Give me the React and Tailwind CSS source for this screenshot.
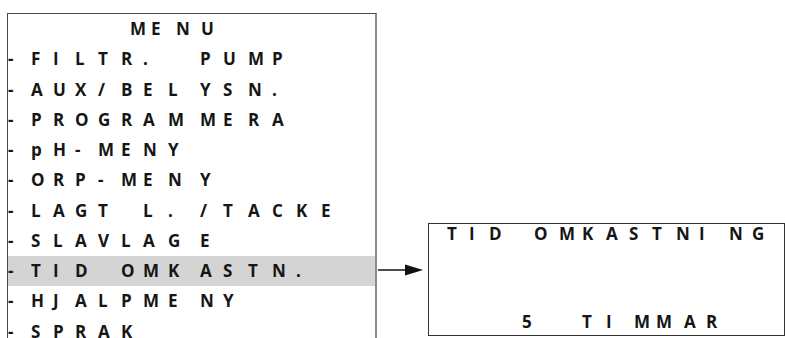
import React from "react";

const menuRows = [
  "-FILTR. PUMP",
  "-AUX/BELYSN.",
  "-PROGRAMMERA",
  "-pH-MENY",
  "-ORP-MENY",
  "-LAGT L./TACKE",
  "-SLAVLAGE",
  "-TID OMKASTN.",
  "-HJALPMENY",
  "-SPRAK",
];

const font = { fontFamily: "'Open Sans', Lato, sans-serif" };

function MenuRow({ text, active }) {
  return (
    <div
      className={
        "grid grid-cols-[23px_22px_22px_23px_23px_22px_25px_32px_23px_25px_24px_24px_25px_1fr] h-[30.25px] items-center leading-[30.25px] " +
        (active ? "bg-[#d4d4d4]" : "")
      }
    >
      {text.split("").map((c, i) => (
        <span key={i}>{c}</span>
      ))}
    </div>
  );
}

export default function App() {
  return (
    <div
      className="h-[338px] w-[785px] overflow-hidden bg-white flex items-start text-[17px] font-bold text-[#161616]"
      style={font}
    >
      {/* menu list */}
      <div className="ml-[7px] mt-[13px] w-[370px] h-[340px] border-l border-t border-[#4a4a4a] border-r-2 border-r-[#8a8a8a]">
        <div className="flex h-[30.25px] items-center leading-[30.25px] pl-[122px]">
          <span className="w-[21px]">M</span>
          <span className="w-[25px]">E</span>
          <span className="w-[25px]">N</span>
          <span>U</span>
        </div>
        {menuRows.map((r) => (
          <MenuRow key={r} text={r} active={r === "-TID OMKASTN."} />
        ))}
      </div>

      {/* arrow */}
      <div className="w-[51px] mt-[264px] flex">
        <svg width="51" height="12" viewBox="0 0 51 12">
          <line x1="1" y1="6" x2="30" y2="6" stroke="#111" strokeWidth="1.5" />
          <polygon points="28,0.5 46,6 28,11.5" fill="#111" />
        </svg>
      </div>

      {/* detail panel */}
      <div className="mt-[223px] w-[357px] h-[113px] border border-[#333] flex flex-col justify-between pb-[3px]">
        <div className="flex h-5 leading-5 pl-[18px]">
          <span className="w-[22px]">T</span>
          <span className="w-[20px]">I</span>
          <span className="w-[45px]">D</span>
          <span className="w-[25px]">O</span>
          <span className="w-[23px]">M</span>
          <span className="w-[24px]">K</span>
          <span className="w-[23px]">A</span>
          <span className="w-[23px]">S</span>
          <span className="w-[24px]">T</span>
          <span className="w-[23px]">N</span>
          <span className="w-[30px]">I</span>
          <span className="w-[23px]">N</span>
          <span>G</span>
        </div>
        <div className="flex h-5 leading-5 pl-[93px]">
          <span className="w-[60px]">5</span>
          <span className="w-[24px]">T</span>
          <span className="w-[28px]">I</span>
          <span className="w-[22px]">M</span>
          <span className="w-[28px]">M</span>
          <span className="w-[22px]">A</span>
          <span>R</span>
        </div>
      </div>
    </div>
  );
}
